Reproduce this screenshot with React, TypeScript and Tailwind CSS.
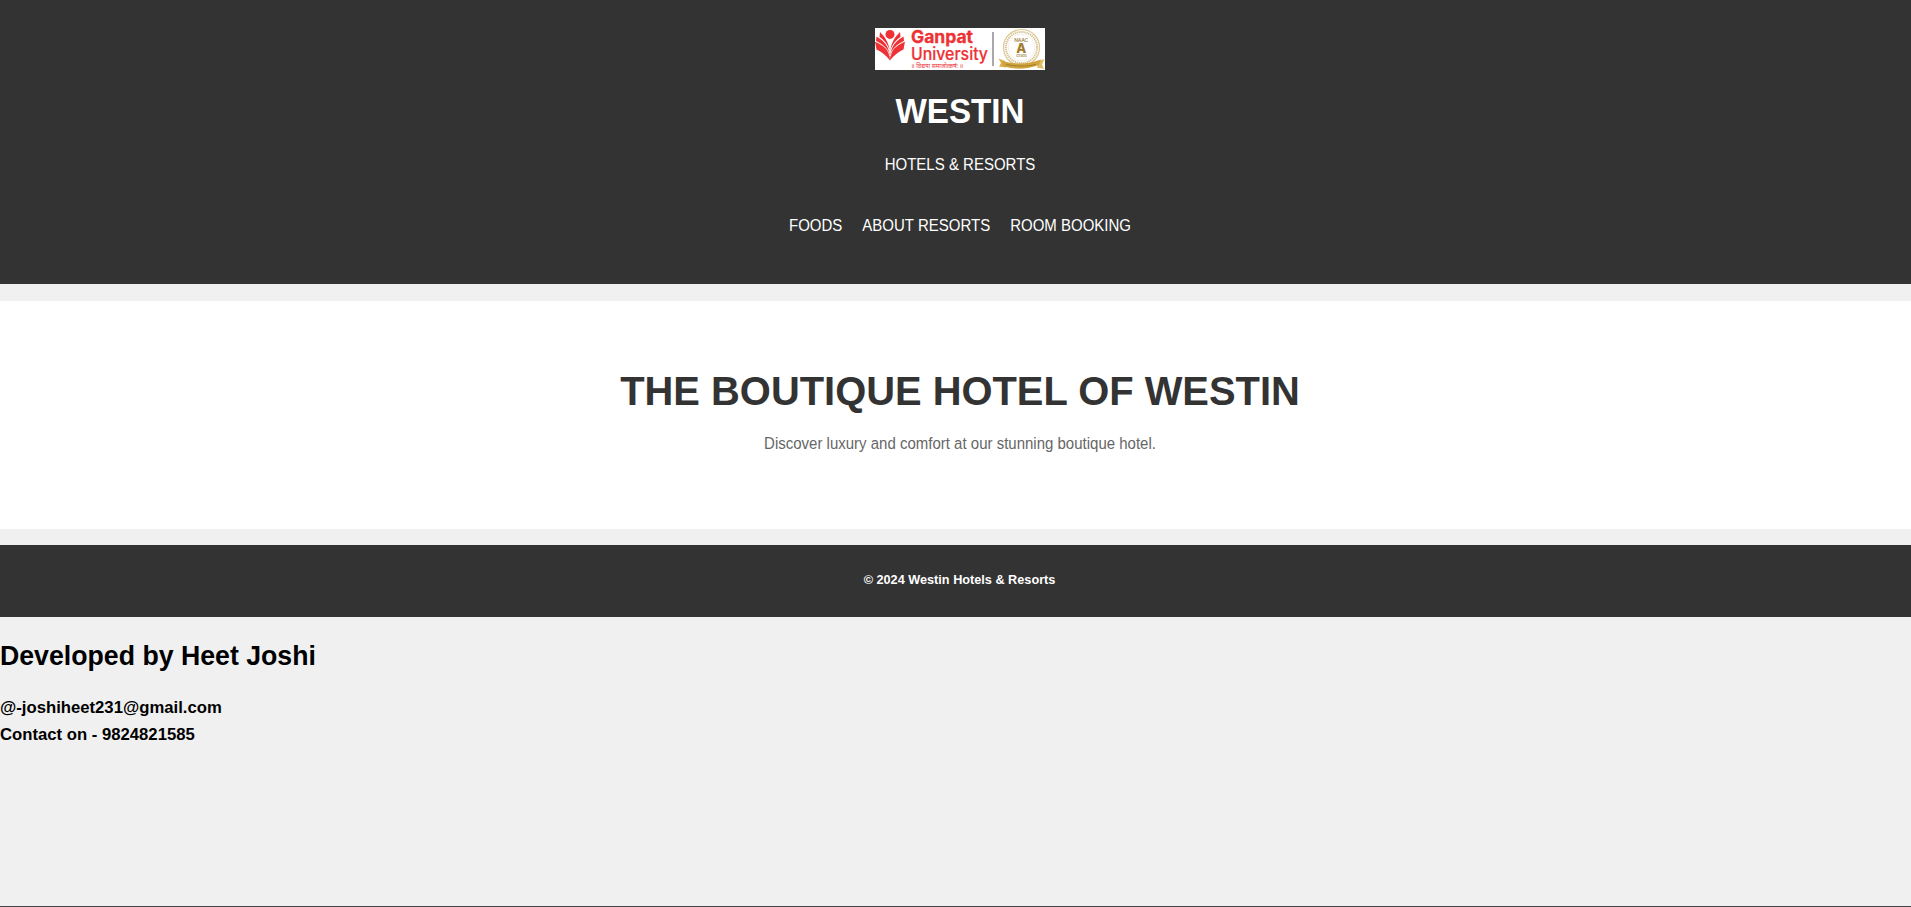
function Logo() {
  return (
    <svg className="block h-[42px] w-[170px] bg-white" viewBox="0 0 170 42" fontFamily="Inter, 'Noto Sans', sans-serif">
      <circle cx="15" cy="6.4" r="4.5" fill="#ee3135" />
      <g fill="#ee3135">
        <path d="M0 13.500 C6 16 12 20.500 14.600 27 L15 32.500 C11 27 6 23.500 1.500 21.500 Z" />
        <path d="M1.500 8.500 C8 12 12.500 17 14.600 24 L14.600 28 C11.500 20.500 7 16 1 13 Z" />
        <path d="M5 4 C10 9 13.500 14 14.700 22.500 C12 16 8.500 11.500 4.500 9 Z" />
        <path d="M30 13.500 C24 16 18 20.500 15.400 27 L15 32.500 C19 27 24 23.500 28.500 21.500 Z" />
        <path d="M28.500 8.500 C22 12 17.500 17 15.400 24 L15.400 28 C18.500 20.500 23 16 29 13 Z" />
        <path d="M25 4 C20 9 16.500 14 15.300 22.500 C18 16 21.500 11.500 25.500 9 Z" />
      </g>
      <g fill="none" stroke="#fff" strokeWidth=".7">
        <path d="M0 13.200 C8 16.500 13 20 14.600 28" />
        <path d="M2 8 C9 12 13.500 17 14.600 25" />
        <path d="M30 13.200 C22 16.500 17 20 15.400 28" />
        <path d="M28 8 C21 12 16.500 17 15.400 25" />
      </g>
      <text x="36" y="15.200" fontSize="17" fontWeight="700" fill="#ee3135" stroke="#ee3135" strokeWidth=".3" textLength="62" lengthAdjust="spacingAndGlyphs">Ganpat</text>
      <text x="36" y="32" fontSize="17" fontWeight="500" fill="#ee3135" stroke="#ee3135" strokeWidth=".2" textLength="77" lengthAdjust="spacingAndGlyphs">University</text>
      <text x="36" y="40" fontSize="6" fill="#ee3135" textLength="52" lengthAdjust="spacingAndGlyphs">॥ विद्यया समाजोत्कर्षः ॥</text>
      <rect x="117.500" y="4" width="1" height="34" fill="#55555a" />
      <circle cx="146.500" cy="19.500" r="18" fill="none" stroke="#dfc88f" strokeWidth="1.200" />
      <circle cx="146.500" cy="19.500" r="15.600" fill="none" stroke="#d3bf95" strokeWidth="2" strokeDasharray="1.200 .8" />
      <circle cx="146.500" cy="19.500" r="13.300" fill="#fff" stroke="#efe6cc" strokeWidth=".6" />
      <text x="146.200" y="13.600" textAnchor="middle" fontSize="5" fontWeight="600" fill="#a58a4c" textLength="14">NAAC</text>
      <text x="146.200" y="24.500" textAnchor="middle" fontSize="13" fontWeight="800" fill="#a07c2c">A</text>
      <text x="146.500" y="29.300" textAnchor="middle" fontSize="4" fontWeight="500" fill="#a58a4c" textLength="11">Grade</text>
      <path d="M123.500 30.500 L130 33 L131 39.500 L124 38.500 L126 35Z" fill="#dcb04a" />
      <path d="M169.500 31 L163 33 L162 39.500 L169 41 L167 36.500Z" fill="#e2bd62" />
      <path d="M127 33 Q146.500 38.500 166 31.500 L164 37 Q146.500 43.500 128.500 38.500Z" fill="#d0a43c" />
      <path d="M131 36.500 Q146.500 39.500 161 36.500" fill="none" stroke="#8d6d20" strokeWidth="1" strokeDasharray="1.500 .6" />
    </svg>
  );
}

export default function App() {
  return (
    <div className="flex h-[907px] flex-col overflow-hidden border-b border-[#444446] bg-[#f0f0f0] font-['Liberation_Sans',Arial,sans-serif] text-black">
      <header className="flex h-[284px] shrink-0 flex-col items-center bg-[#333333] pt-7 pl-[9px] text-white">
        <Logo />
        <h1 className="mt-[22px] origin-[50%_78%] scale-y-[1.05] text-[33.2px] leading-10 font-bold">WESTIN</h1>
        <p className="mt-[21px] origin-[50%_78%] translate-y-[0.5px] scale-y-[1.07] text-[15px] leading-6">HOTELS &amp; RESORTS</p>
        <nav className="mt-[37px] flex origin-[50%_78%] translate-y-[0.5px] scale-y-[1.07] gap-5 text-[15px] leading-6">
          <a>FOODS</a>
          <a>ABOUT RESORTS</a>
          <a>ROOM BOOKING</a>
        </nav>
      </header>
      <main className="mt-[17px] flex h-[228px] shrink-0 flex-col items-center bg-white pt-[66px] pl-[9px]">
        <h2 className="origin-[50%_79%] scale-y-[1.04] text-[39.9px] leading-[48px] font-bold text-[#333333]">THE BOUTIQUE HOTEL OF WESTIN</h2>
        <p className="mt-[17px] origin-[50%_71%] translate-y-[0.5px] scale-y-[1.05] text-[15px] leading-6 text-[#666666]">Discover luxury and comfort at our stunning boutique hotel.</p>
      </main>
      <footer className="mt-4 flex h-[72px] shrink-0 justify-center bg-[#333333] pt-[26px] pl-2 text-[12.7px] leading-5 font-bold text-white">
        <p className="origin-[50%_73%] translate-y-[0.5px] scale-y-[1.06]">© 2024 Westin Hotels &amp; Resorts</p>
      </footer>
      <section className="mt-[19px] font-bold">
        <h2 className="origin-[0%_73%] scale-y-[1.06] text-[26.7px] leading-10">Developed by Heet Joshi</h2>
        <div className="mt-[18px] text-[16.7px] leading-[27px]">
          <p>@-joshiheet231@gmail.com</p>
          <p>Contact on - 9824821585</p>
        </div>
      </section>
    </div>
  );
}
